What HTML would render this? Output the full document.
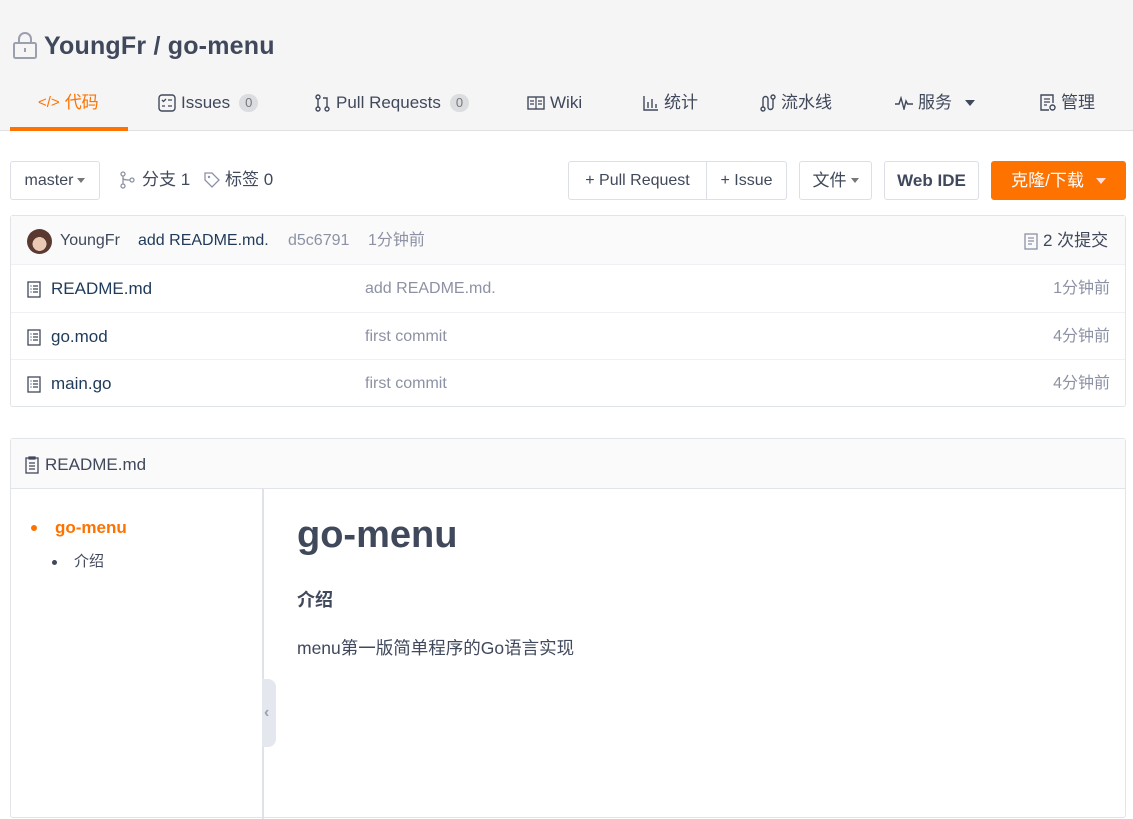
<!DOCTYPE html>
<html><head><meta charset="utf-8"><style>
*{box-sizing:border-box;margin:0;padding:0}
body{width:1133px;height:797px;overflow:hidden;background:#fff;font-family:"Liberation Sans","Noto Sans CJK SC",sans-serif;color:#40485b;font-size:16px;position:relative;line-height:20px}
.a{position:absolute;white-space:nowrap;line-height:20px}
.hdr{position:absolute;left:0;top:0;width:1133px;height:131px;background:#f5f5f5;border-bottom:1px solid #e0e0e0}
.tab{position:absolute;top:93px;height:20px;font-size:17px;color:#40485b;display:flex;align-items:center;gap:5px;line-height:20px}
.tab span,.tab svg{display:block}
.badge{background:#dcdde0;color:#777;border-radius:10px;font-size:13px;padding:0 6px;margin-left:4px;line-height:18px}
.btn{position:absolute;top:161px;height:39px;border:1px solid #dcdfe6;border-radius:3px;background:#fff;display:flex;align-items:center;justify-content:center;font-size:16px;line-height:20px}
.box{position:absolute;left:10px;width:1116px;border:1px solid #e1e4e8;border-radius:3px}
.row{position:absolute;left:0;width:1114px;height:48px;border-top:1px solid #eef0f3}
.row span{position:absolute;top:14px;line-height:20px;height:20px;display:flex;align-items:center}
.gray{color:#8c92a4}
.caret{display:inline-block;width:0;height:0;border-left:4px solid transparent;border-right:4px solid transparent;border-top:5px solid currentColor;margin-left:4px}
.fx{display:flex;align-items:center;height:20px}
</style></head><body>
<div class="hdr"></div>
<svg class="a" style="left:12px;top:31px" width="26" height="28" viewBox="0 0 26 28"><path d="M7 12V8a6 6 0 0 1 12 0v4" fill="none" stroke="#9aa0ad" stroke-width="2"/><rect x="2" y="12" width="22" height="15" rx="1.5" fill="none" stroke="#9aa0ad" stroke-width="2"/><rect x="12" y="17" width="2" height="4" fill="#9aa0ad"/></svg>
<div class="a" style="left:44px;top:33px;font-size:25px;line-height:26px;font-weight:bold;color:#40485b;letter-spacing:0.2px">YoungFr / go-menu</div>

<div class="tab" style="left:38px;color:#fe7300"><span style="font-size:15px">&lt;/&gt;</span><span>代码</span></div>
<div class="a" style="left:10px;top:127px;width:118px;height:4px;background:#fe7300"></div>
<div class="tab" style="left:158px"><svg width="18" height="18" viewBox="0 0 18 18"><rect x="1" y="1" width="16" height="16" rx="3" fill="none" stroke="#40485b" stroke-width="1.4"/><path d="M4 6l1.5 1.5L8 5M10 6h4M4 12h3M10 12h4" stroke="#40485b" stroke-width="1.3" fill="none"/></svg><span>Issues</span><span class="badge">0</span></div>
<div class="tab" style="left:315px"><svg width="16" height="18" viewBox="0 0 16 18"><circle cx="3" cy="3" r="2" fill="none" stroke="#40485b" stroke-width="1.4"/><circle cx="3" cy="15" r="2" fill="none" stroke="#40485b" stroke-width="1.4"/><circle cx="12" cy="15" r="2" fill="none" stroke="#40485b" stroke-width="1.4"/><path d="M3 5v8M12 13V4H8" stroke="#40485b" stroke-width="1.4" fill="none"/></svg><span>Pull Requests</span><span class="badge">0</span></div>
<div class="tab" style="left:527px"><svg width="18" height="14" viewBox="0 0 18 14"><rect x="1" y="1" width="16" height="12" fill="none" stroke="#40485b" stroke-width="1.4"/><path d="M9 1v12M3 5h4M3 8h4M11 5h4M11 8h4" stroke="#40485b" stroke-width="1.2"/></svg><span>Wiki</span></div>
<div class="tab" style="left:643px"><svg width="16" height="16" viewBox="0 0 16 16"><path d="M1 1v14h14M5 13V7M9 13V4M13 13V9" stroke="#40485b" stroke-width="1.4" fill="none"/></svg><span>统计</span></div>
<div class="tab" style="left:760px"><svg width="16" height="18" viewBox="0 0 16 18"><circle cx="3" cy="15" r="2" fill="none" stroke="#40485b" stroke-width="1.4"/><circle cx="13" cy="3" r="2" fill="none" stroke="#40485b" stroke-width="1.4"/><path d="M3 13V5a2.5 2.5 0 0 1 5 0v8a2.5 2.5 0 0 0 5 0V5" stroke="#40485b" stroke-width="1.4" fill="none"/></svg><span>流水线</span></div>
<div class="tab" style="left:895px"><svg width="18" height="14" viewBox="0 0 18 14"><path d="M0 8h4l2-6 3 11 2-8 1.5 3H18" stroke="#40485b" stroke-width="1.4" fill="none"/></svg><span>服务</span><span class="caret" style="border-left-width:5px;border-right-width:5px;border-top-width:6px;margin-left:8px"></span></div>
<div class="tab" style="left:1040px"><svg width="16" height="18" viewBox="0 0 16 18"><path d="M9 16H1V1h12v8" stroke="#40485b" stroke-width="1.4" fill="none"/><path d="M4 5h6M4 8h6M4 11h3" stroke="#40485b" stroke-width="1.3"/><circle cx="12.5" cy="13.5" r="2.5" fill="none" stroke="#40485b" stroke-width="1.4"/></svg><span>管理</span></div>

<div class="btn" style="left:10px;width:90px">master<span class="caret" style="color:#777"></span></div>
<div class="a fx" style="left:120px;top:170px;font-size:17px;gap:6px"><svg width="16" height="18" viewBox="0 0 16 18"><circle cx="3" cy="3" r="2" fill="none" stroke="#8c92a4" stroke-width="1.3"/><circle cx="3" cy="15" r="2" fill="none" stroke="#8c92a4" stroke-width="1.3"/><circle cx="12" cy="9" r="2" fill="none" stroke="#8c92a4" stroke-width="1.3"/><path d="M3 5v8M3 7c0 2 3 2 7 2" stroke="#8c92a4" stroke-width="1.3" fill="none"/></svg><span>分支 1</span></div>
<div class="a fx" style="left:204px;top:170px;font-size:17px;gap:5px"><svg width="16" height="16" viewBox="0 0 16 16"><path d="M1 1h7l7 7-7 7-7-7z" fill="none" stroke="#8c92a4" stroke-width="1.3"/><circle cx="5" cy="5" r="1.2" fill="#8c92a4"/></svg><span>标签 0</span></div>

<div class="btn" style="left:568px;width:139px;border-radius:3px 0 0 3px">+ Pull Request</div>
<div class="btn" style="left:706px;width:81px;border-radius:0 3px 3px 0">+ Issue</div>
<div class="btn" style="left:799px;width:73px;font-size:17px">文件<span class="caret" style="color:#777"></span></div>
<div class="btn" style="left:884px;width:95px;font-weight:bold;font-size:17px">Web IDE</div>
<div class="btn" style="left:991px;width:135px;background:#fe7300;border-color:#fe7300;color:#fff;font-size:17px">克隆/下载<span class="caret" style="margin-left:12px;border-left-width:5px;border-right-width:5px;border-top-width:6px;color:#fdd"></span></div>

<div class="box" style="top:215px;height:192px">
 <div class="a" style="left:0;top:0;width:1114px;height:48px;background:#fafafa"></div>
 <div class="a" style="left:16px;top:13px;width:25px;height:25px;border-radius:50%;background:radial-gradient(circle at 50% 60%,#e9c8b4 0 35%,#5a3a30 36%)"></div>
 <span class="a fx" style="left:49px;top:15px">YoungFr</span>
 <span class="a fx" style="left:127px;top:15px;color:#1f3a5a">add README.md.</span>
 <span class="a fx gray" style="left:277px;top:15px">d5c6791</span>
 <span class="a fx gray" style="left:357px;top:15px">1分钟前</span>
 <span class="a fx" style="left:1013px;top:15px;gap:5px;font-size:17px"><svg width="14" height="17" viewBox="0 0 14 17"><rect x="1" y="1" width="12" height="15" fill="none" stroke="#8c92a4" stroke-width="1.3"/><path d="M4 5h6M4 8h6M4 11h4" stroke="#8c92a4" stroke-width="1.2"/></svg><span>2 次提交</span></span>
 <div class="row" style="top:48px"><span style="left:16px"><svg width="14" height="17" viewBox="0 0 14 17"><rect x="1" y="1" width="12" height="15" fill="none" stroke="#40485b" stroke-width="1.3"/><path d="M3.5 5h1M6 5h5M3.5 8h1M6 8h5M3.5 11h1M6 11h5" stroke="#40485b" stroke-width="1.2"/></svg></span><span style="left:40px;color:#1f3a5a;font-size:17px">README.md</span><span class="gray" style="left:354px">add README.md.</span><span class="gray" style="right:15px">1分钟前</span></div>
 <div class="row" style="top:96px"><span style="left:16px"><svg width="14" height="17" viewBox="0 0 14 17"><rect x="1" y="1" width="12" height="15" fill="none" stroke="#40485b" stroke-width="1.3"/><path d="M3.5 5h1M6 5h5M3.5 8h1M6 8h5M3.5 11h1M6 11h5" stroke="#40485b" stroke-width="1.2"/></svg></span><span style="left:40px;color:#1f3a5a;font-size:17px">go.mod</span><span class="gray" style="left:354px">first commit</span><span class="gray" style="right:15px">4分钟前</span></div>
 <div class="row" style="top:143px"><span style="left:16px"><svg width="14" height="17" viewBox="0 0 14 17"><rect x="1" y="1" width="12" height="15" fill="none" stroke="#40485b" stroke-width="1.3"/><path d="M3.5 5h1M6 5h5M3.5 8h1M6 8h5M3.5 11h1M6 11h5" stroke="#40485b" stroke-width="1.2"/></svg></span><span style="left:40px;color:#1f3a5a;font-size:17px">main.go</span><span class="gray" style="left:354px">first commit</span><span class="gray" style="right:15px">4分钟前</span></div>
</div>

<div class="box" style="top:438px;height:380px">
 <div class="a" style="left:0;top:0;width:1114px;height:50px;background:#fafafa;border-bottom:1px solid #e1e4e8"></div>
 <span class="a fx" style="left:14px;top:16px;gap:6px;font-size:17px"><svg width="14" height="18" viewBox="0 0 14 18"><rect x="1" y="2" width="12" height="15" fill="none" stroke="#40485b" stroke-width="1.3"/><path d="M4 1h6v2H4zM4 7h6M4 10h6M4 13h6" stroke="#40485b" stroke-width="1.2" fill="none"/></svg><span>README.md</span></span>
 <div class="a" style="left:251px;top:50px;width:2px;height:330px;background:#dfe3e9"></div>
 <div class="a" style="left:251px;top:240px;width:14px;height:68px;background:#e4e8ee;border-radius:0 8px 8px 0"></div>
 <div class="a" style="left:253px;top:264px;font-size:16px;color:#9aa0ad;font-weight:bold">‹</div>
 <div class="a" style="left:20px;top:86px;width:6px;height:6px;border-radius:50%;background:#fe7300"></div>
 <span class="a" style="left:44px;top:79px;color:#fe7300;font-weight:bold;font-size:17px">go-menu</span>
 <div class="a" style="left:41px;top:121px;width:5px;height:5px;border-radius:50%;background:#40485b"></div>
 <span class="a" style="left:63px;top:113px;font-size:15px">介绍</span>
 <span class="a" style="left:286px;top:76px;font-size:38px;line-height:40px;font-weight:bold;color:#40485b">go-menu</span>
 <span class="a" style="left:286px;top:151px;font-size:18px;font-weight:bold">介绍</span>
 <span class="a" style="left:286px;top:199px;font-size:17.5px">menu第一版简单程序的Go语言实现</span>
</div>
</body></html>
